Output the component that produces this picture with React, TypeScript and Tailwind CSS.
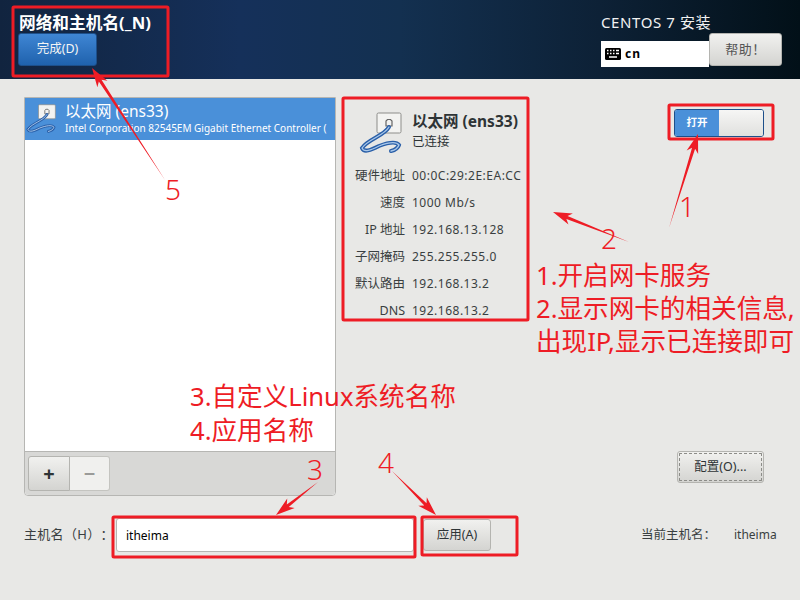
import type { ReactNode } from 'react'

const uiFont = "[font-family:'Noto_Sans','Noto_Sans_CJK_SC',sans-serif]"

const details = [
  { label: '硬件地址', value: '00:0C:29:2E:EA:CC' },
  { label: '速度', value: '1000 Mb/s' },
  { label: 'IP 地址', value: '192.168.13.128' },
  { label: '子网掩码', value: '255.255.255.0' },
  { label: '默认路由', value: '192.168.13.2' },
  { label: 'DNS', value: '192.168.13.2' },
]

const redBoxes = [
  { x: 13, y: 7, w: 155, h: 69 },
  { x: 343, y: 98, w: 185, h: 222 },
  { x: 669, y: 105, w: 104, h: 34 },
  { x: 113, y: 517, w: 302, h: 40 },
  { x: 422, y: 517, w: 95, h: 38 },
]

// start and tip of the hand-drawn arrows
const arrows = [
  { x1: 165, y1: 180, x2: 92, y2: 68 },
  { x1: 669, y1: 228, x2: 698, y2: 134 },
  { x1: 629, y1: 242, x2: 553, y2: 212 },
  { x1: 318, y1: 482, x2: 276, y2: 515 },
  { x1: 392, y1: 471, x2: 436, y2: 515 },
]

const numbers = [
  { n: '5', x: 165, y: 171 },
  { n: '1', x: 679, y: 188 },
  { n: '2', x: 601, y: 220 },
  { n: '3', x: 307, y: 451 },
  { n: '4', x: 378, y: 444 },
]

function arrowPoints(a: { x1: number; y1: number; x2: number; y2: number }) {
  const dx = a.x2 - a.x1
  const dy = a.y2 - a.y1
  const len = Math.hypot(dx, dy)
  const ux = dx / len
  const uy = dy / len
  const px = -uy
  const py = ux
  const at = (along: number, side: number) =>
    `${a.x2 - ux * along + px * side},${a.y2 - uy * along + py * side}`
  return [
    `${a.x1},${a.y1}`,
    at(15, 1.6),
    at(19, 6),
    `${a.x2},${a.y2}`,
    at(19, -6),
    at(15, -1.6),
  ].join(' ')
}

function EthernetIcon({ className }: { className: string }) {
  return (
    <svg viewBox="0 0 48 44" className={className}>
      <rect x="19" y="1" width="24" height="20" rx="1.5" fill="#f3f3f1" stroke="#8d8d8a" />
      <path d="M28 14v-5l1.5-1.5h3L34 9v5z" fill="none" stroke="#666" strokeWidth="1.2" />
      <path
        d="M31 15C26 24 10 27 4 36c2 5 9 2 17-2 8-3 17-5 20-1-1 3-4 5-8 6"
        fill="none"
        stroke="#2a5fa8"
        strokeWidth="4"
        strokeLinecap="round"
      />
      <path
        d="M31 15C26 24 10 27 4 36c2 5 9 2 17-2 8-3 17-5 20-1-1 3-4 5-8 6"
        fill="none"
        stroke="#a9c8ea"
        strokeWidth="1.3"
        strokeLinecap="round"
      />
    </svg>
  )
}

function KeyboardIcon() {
  return (
    <svg viewBox="0 0 16 12" className="w-4 h-3">
      <rect width="16" height="12" rx="1.5" fill="#000" />
      <path
        d="M2 2.5h1.5M5 2.5h1.5M8 2.5h1.5M11 2.5h3M2 5.5h1.5M5 5.5h1.5M8 5.5h1.5M11 5.5h3M4 9h8"
        stroke="#fff"
        strokeWidth="1.4"
      />
    </svg>
  )
}

function GrayButton({ className, children }: { className: string; children: ReactNode }) {
  return (
    <button
      className={`flex items-center justify-center rounded-[3px] border border-[#b4b4b0] bg-gradient-to-b from-[#f1f1ef] to-[#d4d4d1] text-[#2e3436] ${className}`}
    >
      {children}
    </button>
  )
}

export default function App() {
  return (
    <div className={`relative w-[800px] h-[600px] overflow-hidden bg-[#e8e8e6] text-[#2e3436] ${uiFont}`}>
      <header className="flex justify-between h-[79px] bg-[linear-gradient(90deg,#11243f_0%,#15305a_30%,#133050_50%,#0d2136_75%,#021018_100%)]">
        <div className="pl-[18px] pt-[12px]">
          <div className="pl-[1px] text-[16.7px] leading-[21px] font-bold text-white whitespace-nowrap">网络和主机名(_N)</div>
          <button className="w-[79px] h-[33px] rounded-[3px] border border-[#1d4f8a] bg-gradient-to-b from-[#3f86d4] to-[#1f62ad] text-[12.5px] text-[#f4f4f4]">
            完成(D)
          </button>
        </div>
        <div className="pr-[18px] pt-[12px] flex flex-col">
          <div className="text-[15px] leading-[20px] tracking-[0.6px] text-[#f2f2f2]">CENTOS 7 安装</div>
          <div className="flex items-start mt-[1px]">
            <div className="flex items-center gap-[4px] w-[108px] h-[26px] mt-[8px] pl-[4px] bg-white text-black text-[12px] font-bold tracking-[1px]">
              <KeyboardIcon />
              cn
            </div>
            <GrayButton className="w-[73px] h-[33px] text-[13px] tracking-[0.5px] text-[#555]">帮助！</GrayButton>
          </div>
        </div>
      </header>

      <main className="flex h-[417px] pt-[18px] pl-[24px] pr-[36px]">
        <section className="flex flex-col w-[312px] h-[399px] rounded-b-[4px] border border-[#b6b6b3] bg-white">
          <div className="flex h-[42px] items-center bg-[#4a90d9] text-white">
            <EthernetIcon className="w-[34px] h-[31px] shrink-0" />
            <div className="ml-[6px] min-w-0 whitespace-nowrap">
              <div className="text-[15.5px] leading-[19px]">以太网 (ens33)</div>
              <div className="text-[10px] leading-[15px]">
                Intel Corporation 82545EM Gigabit Ethernet Controller (
              </div>
            </div>
          </div>
          <div className="flex-1" />
          <div className="flex h-[44px] items-center pl-[3px] rounded-b-[4px] border-t border-[#b6b6b3] bg-[#d8d8d6]">
            <GrayButton className="w-[42px] h-[35px] rounded-r-none text-[20px] font-bold">+</GrayButton>
            <button className="w-[40px] h-[35px] rounded-r-[3px] border border-l-0 border-[#c4c4c0] bg-[#f0f0ee] text-[20px] font-bold text-[#9a9a98]">
              −
            </button>
          </div>
        </section>

        <section className="ml-[18px] w-[170px] pt-[15px]">
          <div className="flex">
            <EthernetIcon className="w-[48px] h-[44px] ml-[4px] shrink-0" />
            <div className="ml-[6px]">
              <div className="text-[15.5px] leading-[18px] font-bold whitespace-nowrap">以太网 (ens33)</div>
              <div className="mt-[4px] text-[12.5px] leading-[16px]">已连接</div>
            </div>
          </div>
          <div className="mt-[11px] grid grid-cols-[51px_1fr] gap-x-[7px] gap-y-[9px] text-[12.5px] leading-[18px] text-[#3a3f41] whitespace-nowrap">
            {details.map((d) => (
              <div key={d.label} className="contents">
                <span className="text-right">{d.label}</span>
                <span className="text-[12px] tracking-[0.5px]">{d.value}</span>
              </div>
            ))}
          </div>
        </section>

        <section className="flex flex-1 flex-col items-end justify-between pt-[12px] pb-[13px]">
          <div className="flex w-[90px] h-[28px] rounded-[3px] border border-[#1d4f8a] overflow-hidden">
            <div className="flex w-[44px] items-center justify-center bg-[#4a90d9] text-[10.5px] font-bold text-white">打开</div>
            <div className="flex-1 bg-gradient-to-b from-[#f6f6f5] to-[#e0e0de]" />
          </div>
          <GrayButton className="w-[87px] h-[32px] text-[12.5px] outline-1 outline-dashed outline-[#8c8c88] -outline-offset-3">
            配置(O)...
          </GrayButton>
        </section>
      </main>

      <footer className="flex items-center h-[34px] mt-[22px] pl-[24px] pr-[24px] text-[12.5px] [text-spacing-trim:space-all]">
        <span className="w-[92px] whitespace-nowrap text-[13px] tracking-[0.3px] text-[#3a3f41]">主机名（H）：</span>
        <input
          readOnly
          value="itheima"
          className="w-[298px] h-[34px] pl-[9px] rounded-[3px] border border-[#b6b6b3] bg-white text-[12px] text-black outline-none"
        />
        <GrayButton className="ml-[9px] w-[68px] h-[32px] text-[12.5px]">应用(A)</GrayButton>
        <span className="ml-auto w-[93px] text-[#3a3f41]">当前主机名：</span>
        <span className="w-[42px] text-[12px] text-[#3a3f41]">itheima</span>
      </footer>

      {/* annotations drawn over the screenshot */}
      <svg viewBox="0 0 800 600" className="absolute inset-0 w-[800px] h-[600px] pointer-events-none">
        {redBoxes.map((b) => (
          <rect key={b.x} x={b.x} y={b.y} width={b.w} height={b.h} fill="none" stroke="#ee1c25" strokeWidth="3" rx="1" />
        ))}
        {arrows.map((a) => (
          <polygon key={a.x1} points={arrowPoints(a)} fill="#ee1c25" />
        ))}
      </svg>
      {numbers.map((t) => (
        <span
          key={t.n}
          className="absolute text-[28px] leading-[36px] font-light text-[#ee1c25]"
          style={{ left: t.x, top: t.y }}
        >
          {t.n}
        </span>
      ))}
      <div className="absolute left-[536px] top-[259px] text-[25.6px] leading-[33px] text-[#ee1c25] whitespace-nowrap">
        <div>1.开启网卡服务</div>
        <div>2.显示网卡的相关信息,</div>
        <div>出现IP,显示已连接即可</div>
      </div>
      <div className="absolute left-[190px] top-[380px] text-[25.6px] leading-[34px] text-[#ee1c25] whitespace-nowrap">
        <div>3.自定义Linux系统名称</div>
        <div>4.应用名称</div>
      </div>
    </div>
  )
}
